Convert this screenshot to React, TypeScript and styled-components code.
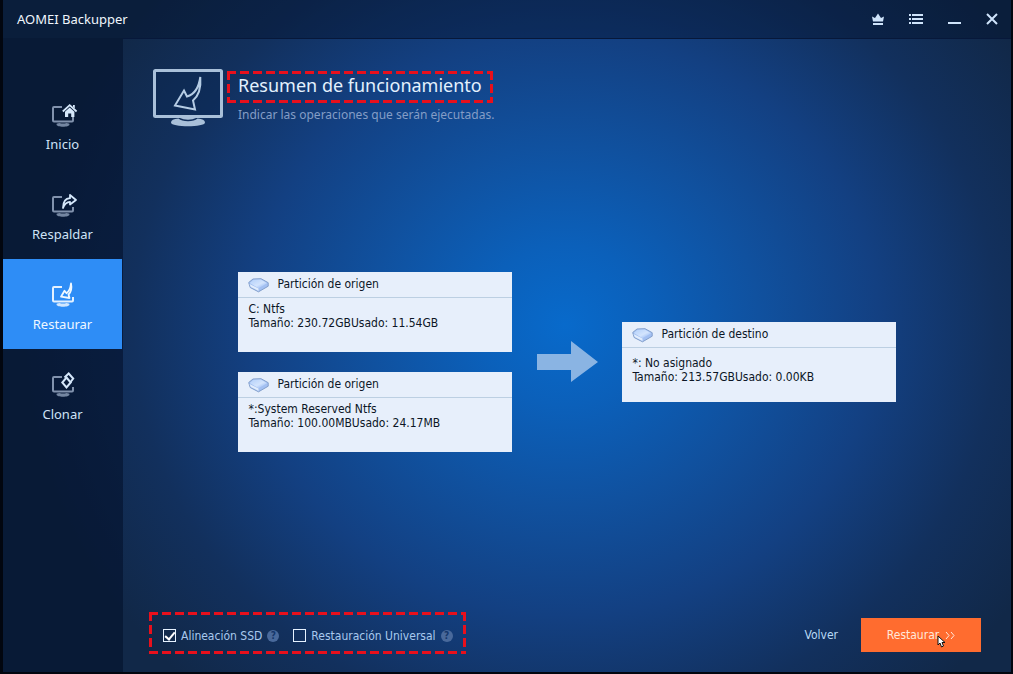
import React from "react";
import styled, { createGlobalStyle, css } from "styled-components";

const GlobalStyle = createGlobalStyle`
  * { box-sizing: border-box; }
  body {
    margin: 0;
    background: #000;
    font-family: "DejaVu Sans Condensed", "DejaVu Sans", sans-serif;
    font-size: 12px;
  }
  button { font: inherit; border: 0; padding: 0; background: none; color: inherit; cursor: pointer; }
  h1, h2, p, ul { margin: 0; padding: 0; font-weight: normal; list-style: none; }
  svg { display: block; flex: none; }
`;

const Window = styled.div`
  min-height: 100vh;
  display: flex;
  flex-direction: column;
  border: solid #02060f;
  border-width: 0 2px 2px 3px;
  background: radial-gradient(
    ellipse 540px 500px at 562px 325px,
    #086acb 0%,
    #0b60ba 16%,
    #10519f 36%,
    #134082 58%,
    #12305d 80%,
    #112848 100%
  );
`;

const TitleBar = styled.header`
  display: flex;
  align-items: center;
  justify-content: space-between;
  height: 38px;
  padding: 0 10px 0 14px;
  background: rgba(3, 17, 44, 0.42);
`;

const AppName = styled.div`
  font-family: "Noto Sans", sans-serif;
  font-size: 13px;
  color: #f0f6fd;
`;

const WindowControls = styled.div`
  display: flex;
  gap: 20px;
`;

const WindowButton = styled.button`
  width: 18px;
  height: 18px;
  display: grid;
  place-items: center;
  color: #cfe4fb;
`;

const Body = styled.div`
  flex: 1;
  display: flex;
`;

const Sidebar = styled.nav`
  flex: none;
  width: 120px;
  padding: 41px 1px 0 0;
  background: rgba(3, 17, 44, 0.6);
`;

const NavItem = styled.button<{ $active?: boolean }>`
  width: 100%;
  height: 90px;
  display: flex;
  flex-direction: column;
  align-items: center;
  justify-content: center;
  gap: 7px;
  padding-top: 8px;
  font-family: "Noto Sans", sans-serif;
  font-size: 13px;
  line-height: 20px;
  color: ${(p) => (p.$active ? "#eef7ff" : "#cfe2f6")};
  ${(p) => p.$active && css`background: #2e8df6;`}
`;

const Main = styled.main`
  flex: 1;
  display: flex;
  flex-direction: column;
  border-top: 1px solid #07183a;
`;

const dashX = "repeating-linear-gradient(90deg, #e8101c 0 9px, transparent 9px 13px)";
const dashY = "repeating-linear-gradient(180deg, #e8101c 0 9px, transparent 9px 13px)";
const highlight = css`
  background:
    ${dashX} top / 100% 3px no-repeat,
    ${dashX} bottom / 100% 3px no-repeat,
    ${dashY} left / 3px 100% no-repeat,
    ${dashY} right / 3px 100% no-repeat;
`;

const PageHeader = styled.div`
  display: flex;
  gap: 4px;
  padding: 29px 30px 0;
`;

const HeadingText = styled.div`
  padding-top: 3px;
  font-family: "Noto Sans", sans-serif;
`;

const Title = styled.h1`
  width: fit-content;
  height: 32px;
  padding: 0 11px;
  font-size: 18px;
  line-height: 28px;
  color: #e3f1fe;
  ${highlight}
`;

const Subtitle = styled.p`
  padding: 4px 11px 0;
  font-size: 12px;
  line-height: 16px;
  color: #849dc6;
`;

const Diagram = styled.section`
  flex: 1;
  display: flex;
  align-items: center;
  justify-content: center;
  gap: 24px;
  padding: 0 1px 16px 0;
`;

const Column = styled.div`
  display: flex;
  flex-direction: column;
  gap: 20px;
`;

const Card = styled.article`
  width: 274px;
  height: 80px;
  background: #e7effb;
  color: #0c1626;
`;

const CardHead = styled.div`
  display: flex;
  align-items: center;
  gap: 9px;
  height: 26px;
  padding: 0 10px;
  border-bottom: 1px solid #bccfe2;
`;

const CardTitle = styled.h2`
  font-size: 12px;
  line-height: 16px;
`;

const CardBody = styled.p<{ $offset: number }>`
  padding: ${(p) => p.$offset}px 11px 0;
  line-height: 14px;
`;

const Footer = styled.footer`
  display: flex;
  align-items: center;
  justify-content: space-between;
  padding: 0 30px 14px 26px;
`;

const Options = styled.div`
  display: flex;
  align-items: center;
  gap: 14px;
  height: 42px;
  margin-bottom: 4px;
  padding: 5px 13px 0 14px;
  ${highlight}
`;

const Option = styled.div`
  display: flex;
  align-items: center;
  gap: 5px;
`;

const OptionLabel = styled.label`
  display: flex;
  align-items: center;
  gap: 5px;
  line-height: 16px;
  color: #a9c9ee;
`;

const Check = styled.input`
  appearance: none;
  width: 13px;
  height: 13px;
  margin: 0;
  border: 1px solid #e6f2ff;
  display: grid;
  place-items: center;
  &:checked::before {
    content: "";
    width: 4px;
    height: 8px;
    margin-bottom: 2px;
    border: solid #ffffff;
    border-width: 0 2px 2px 0;
    transform: rotate(40deg);
  }
`;

const Help = styled.button`
  width: 12px;
  height: 12px;
  border-radius: 50%;
  background: #49699b;
  color: #15376b;
  font-size: 10px;
  font-weight: bold;
  line-height: 12px;
`;

const Actions = styled.div`
  display: flex;
  align-items: center;
  gap: 23px;
`;

const BackButton = styled.button`
  color: #b9d9f5;
`;

const PrimaryButton = styled.button`
  position: relative;
  display: flex;
  align-items: center;
  justify-content: center;
  gap: 6px;
  width: 120px;
  height: 34px;
  background: #ff6c2f;
  color: #ffe9dc;
`;

const Pointer = styled.svg`
  position: absolute;
  left: 76px;
  top: 17px;
`;

const shapes = {
  home: (
    <>
      <path d="m15.800 9.500 6.900-6.300 6.900 6.300" fill="none" stroke="#d6e8fb" strokeWidth="1.800" />
      <path d="M18 9.800 22.700 5.600l4.700 4.200V15h-3.200v-3.500h-3V15H18zM26 3h1.800v3.500L26 5z" fill="#d6e8fb" />
    </>
  ),
  backup: (
    <path d="M16 16c0-6.500 2-9.500 7-9.800V3l6 5-6 4.500V9.800c-3.500.1-5.500 2-7 6.200z" fill="none" stroke="#d6e8fb" strokeWidth="1.800" strokeLinejoin="round" />
  ),
  restore: (
    <path d="M24 1.500c1 5 .3 8.500-2.500 11l1 3.500-8.500-1.300 3.500-6 2 2.500c2.500-1.800 4-5 4.500-9.700z" fill="none" stroke="#f0f8ff" strokeWidth="1.800" strokeLinejoin="round" />
  ),
  clone: (
    <>
      <path d="m17.500 5.500 4.200-4 4.500 5-3 4" fill="none" stroke="#d6e8fb" strokeWidth="2" />
      <path d="m19.500 5.500 4.200 5-4.200 5-4.200-5z" fill="none" stroke="#d6e8fb" strokeWidth="2" />
    </>
  ),
};

type Shape = keyof typeof shapes;

const NavIcon = ({ shape }: { shape: Shape }) => {
  const frame = shape === "restore" ? "#e3f1ff" : "#8192ad";
  return (
    <svg width="30" height="25" viewBox="1 0 30 25" aria-hidden="true">
      <path d="M15 5H7Q6 5 6 6v12.500q0 1 1 1h18q1 0 1-1V15" fill="none" stroke={frame} strokeWidth="2" />
      <path d="M9.500 22.500q0-1.500 3-1.500 3.500 1 7 0 3 0 3 1.500c0 3-13 3-13 0z" fill={frame} opacity=".9" />
      {shapes[shape]}
    </svg>
  );
};

const MonitorIcon = () => (
  <svg width="70" height="59" viewBox="0 0 70 59" aria-hidden="true">
    <rect x="1.500" y="2.500" width="67" height="46" rx="1" fill="#092450" fillOpacity=".35" stroke="#a9c0d9" strokeWidth="3" />
    <path d="M18 54.500q0-3.300 7.500-4 3 2.800 9.500 2.800t9.500-2.800q7.500.7 7.500 4c0 5-34 5-34 0z" fill="#a9c0d9" />
    <path d="M27 50h16q-3 1.800-8 1.800T27 50z" fill="#a9c0d9" />
    <path d="M47.300 9c.8 10.500-.7 18-7.300 23.500l2 9-20-4L31 22.500l3 6C41 26.500 45.800 20 47.300 9z" fill="none" stroke="#b5cce4" strokeWidth="2" strokeLinejoin="miter" />
  </svg>
);

const DiskIcon = () => (
  <svg width="21" height="17" viewBox="0 0 21 17" aria-hidden="true">
    <defs>
      <linearGradient id="disk" x1="0" x2="1" y1="0" y2="1">
        <stop offset="0" stopColor="#b3d0fa" />
        <stop offset=".55" stopColor="#d3e4fd" />
        <stop offset="1" stopColor="#86aef0" />
      </linearGradient>
    </defs>
    <path d="M.7 6.500 5 3l8-.3 7.200 4v3.500l-9.700 5.600-8.300-4.300z" fill="#a3c0f2" stroke="#839fcb" />
    <path d="M1.800 7 5.400 3.800l7.400-.3 6.400 3.700-8.700 5z" fill="url(#disk)" />
    <path d="M1.500 8 10.500 12.600v2.300l-7.700-4z" fill="#e2edfc" />
  </svg>
);

const FlowArrow = () => (
  <svg width="62" height="42" viewBox="0 0 62 42" aria-hidden="true">
    <path d="M1 13h34V0l27 21-27 20V29H1z" fill="#8ab4e3" />
  </svg>
);

const navItems: { label: string; shape: Shape }[] = [
  { label: "Inicio", shape: "home" },
  { label: "Respaldar", shape: "backup" },
  { label: "Restaurar", shape: "restore" },
  { label: "Clonar", shape: "clone" },
];

interface PartitionProps {
  title: string;
  name: string;
  usage: string;
  offset?: number;
}

const Partition = ({ title, name, usage, offset = 4 }: PartitionProps) => (
  <Card>
    <CardHead>
      <DiskIcon />
      <CardTitle>{title}</CardTitle>
    </CardHead>
    <CardBody $offset={offset}>
      {name}
      <br />
      {usage}
    </CardBody>
  </Card>
);

export default function App() {
  return (
    <>
      <GlobalStyle />
      <Window>
        <TitleBar>
          <AppName>AOMEI Backupper</AppName>
          <WindowControls>
            <WindowButton aria-label="Premium">
              <svg width="12" height="13" viewBox="0 0 12 13">
                <path d="M0 3.500 3 5 6 .5 9 5l3-1.500L11 8.500H1zM1 10h10v2H1z" fill="currentColor" />
              </svg>
            </WindowButton>
            <WindowButton aria-label="Menú">
              <svg width="14" height="12" viewBox="0 0 14 12">
                <path d="M0 1h2v2H0zM3 1h11v2H3zM0 5h2v2H0zM3 5h11v2H3zM0 9h2v2H0zM3 9h11v2H3z" fill="currentColor" />
              </svg>
            </WindowButton>
            <WindowButton aria-label="Minimizar">
              <svg width="14" height="12" viewBox="0 0 14 12">
                <path d="M1 9h13v2H1z" fill="currentColor" />
              </svg>
            </WindowButton>
            <WindowButton aria-label="Cerrar">
              <svg width="12" height="12" viewBox="0 0 12 12">
                <path d="m1 1 10 10M11 1 1 11" stroke="currentColor" strokeWidth="2" />
              </svg>
            </WindowButton>
          </WindowControls>
        </TitleBar>
        <Body>
          <Sidebar>
            {navItems.map(({ label, shape }) => (
              <NavItem key={label} $active={shape === "restore"}>
                <NavIcon shape={shape} />
                {label}
              </NavItem>
            ))}
          </Sidebar>
          <Main>
            <PageHeader>
              <MonitorIcon />
              <HeadingText>
                <Title>Resumen de funcionamiento</Title>
                <Subtitle>Indicar las operaciones que serán ejecutadas.</Subtitle>
              </HeadingText>
            </PageHeader>
            <Diagram>
              <Column>
                <Partition title="Partición de origen" name="C: Ntfs" usage="Tamaño: 230.72GBUsado: 11.54GB" />
                <Partition title="Partición de origen" name="*:System Reserved Ntfs" usage="Tamaño: 100.00MBUsado: 24.17MB" />
              </Column>
              <FlowArrow />
              <Partition title="Partición de destino" name="*: No asignado" usage="Tamaño: 213.57GBUsado: 0.00KB" offset={8} />
            </Diagram>
            <Footer>
              <Options>
                <Option>
                  <OptionLabel>
                    <Check type="checkbox" defaultChecked />
                    Alineación SSD
                  </OptionLabel>
                  <Help>?</Help>
                </Option>
                <Option>
                  <OptionLabel>
                    <Check type="checkbox" />
                    Restauración Universal
                  </OptionLabel>
                  <Help>?</Help>
                </Option>
              </Options>
              <Actions>
                <BackButton>Volver</BackButton>
                <PrimaryButton>
                  Restaurar
                  <svg width="10" height="9" viewBox="0 0 10 9" aria-hidden="true">
                    <path d="m1 1 3 3.500L1 8M6 1l3 3.500L6 8" fill="none" stroke="currentColor" />
                  </svg>
                  <Pointer width="9" height="13" viewBox="0 0 9 13" aria-hidden="true">
                    <path d="M1 1v9l2-2 1.500 4 2-1-1.500-3.500H8z" fill="#fff" stroke="#111" />
                  </Pointer>
                </PrimaryButton>
              </Actions>
            </Footer>
          </Main>
        </Body>
      </Window>
    </>
  );
}
